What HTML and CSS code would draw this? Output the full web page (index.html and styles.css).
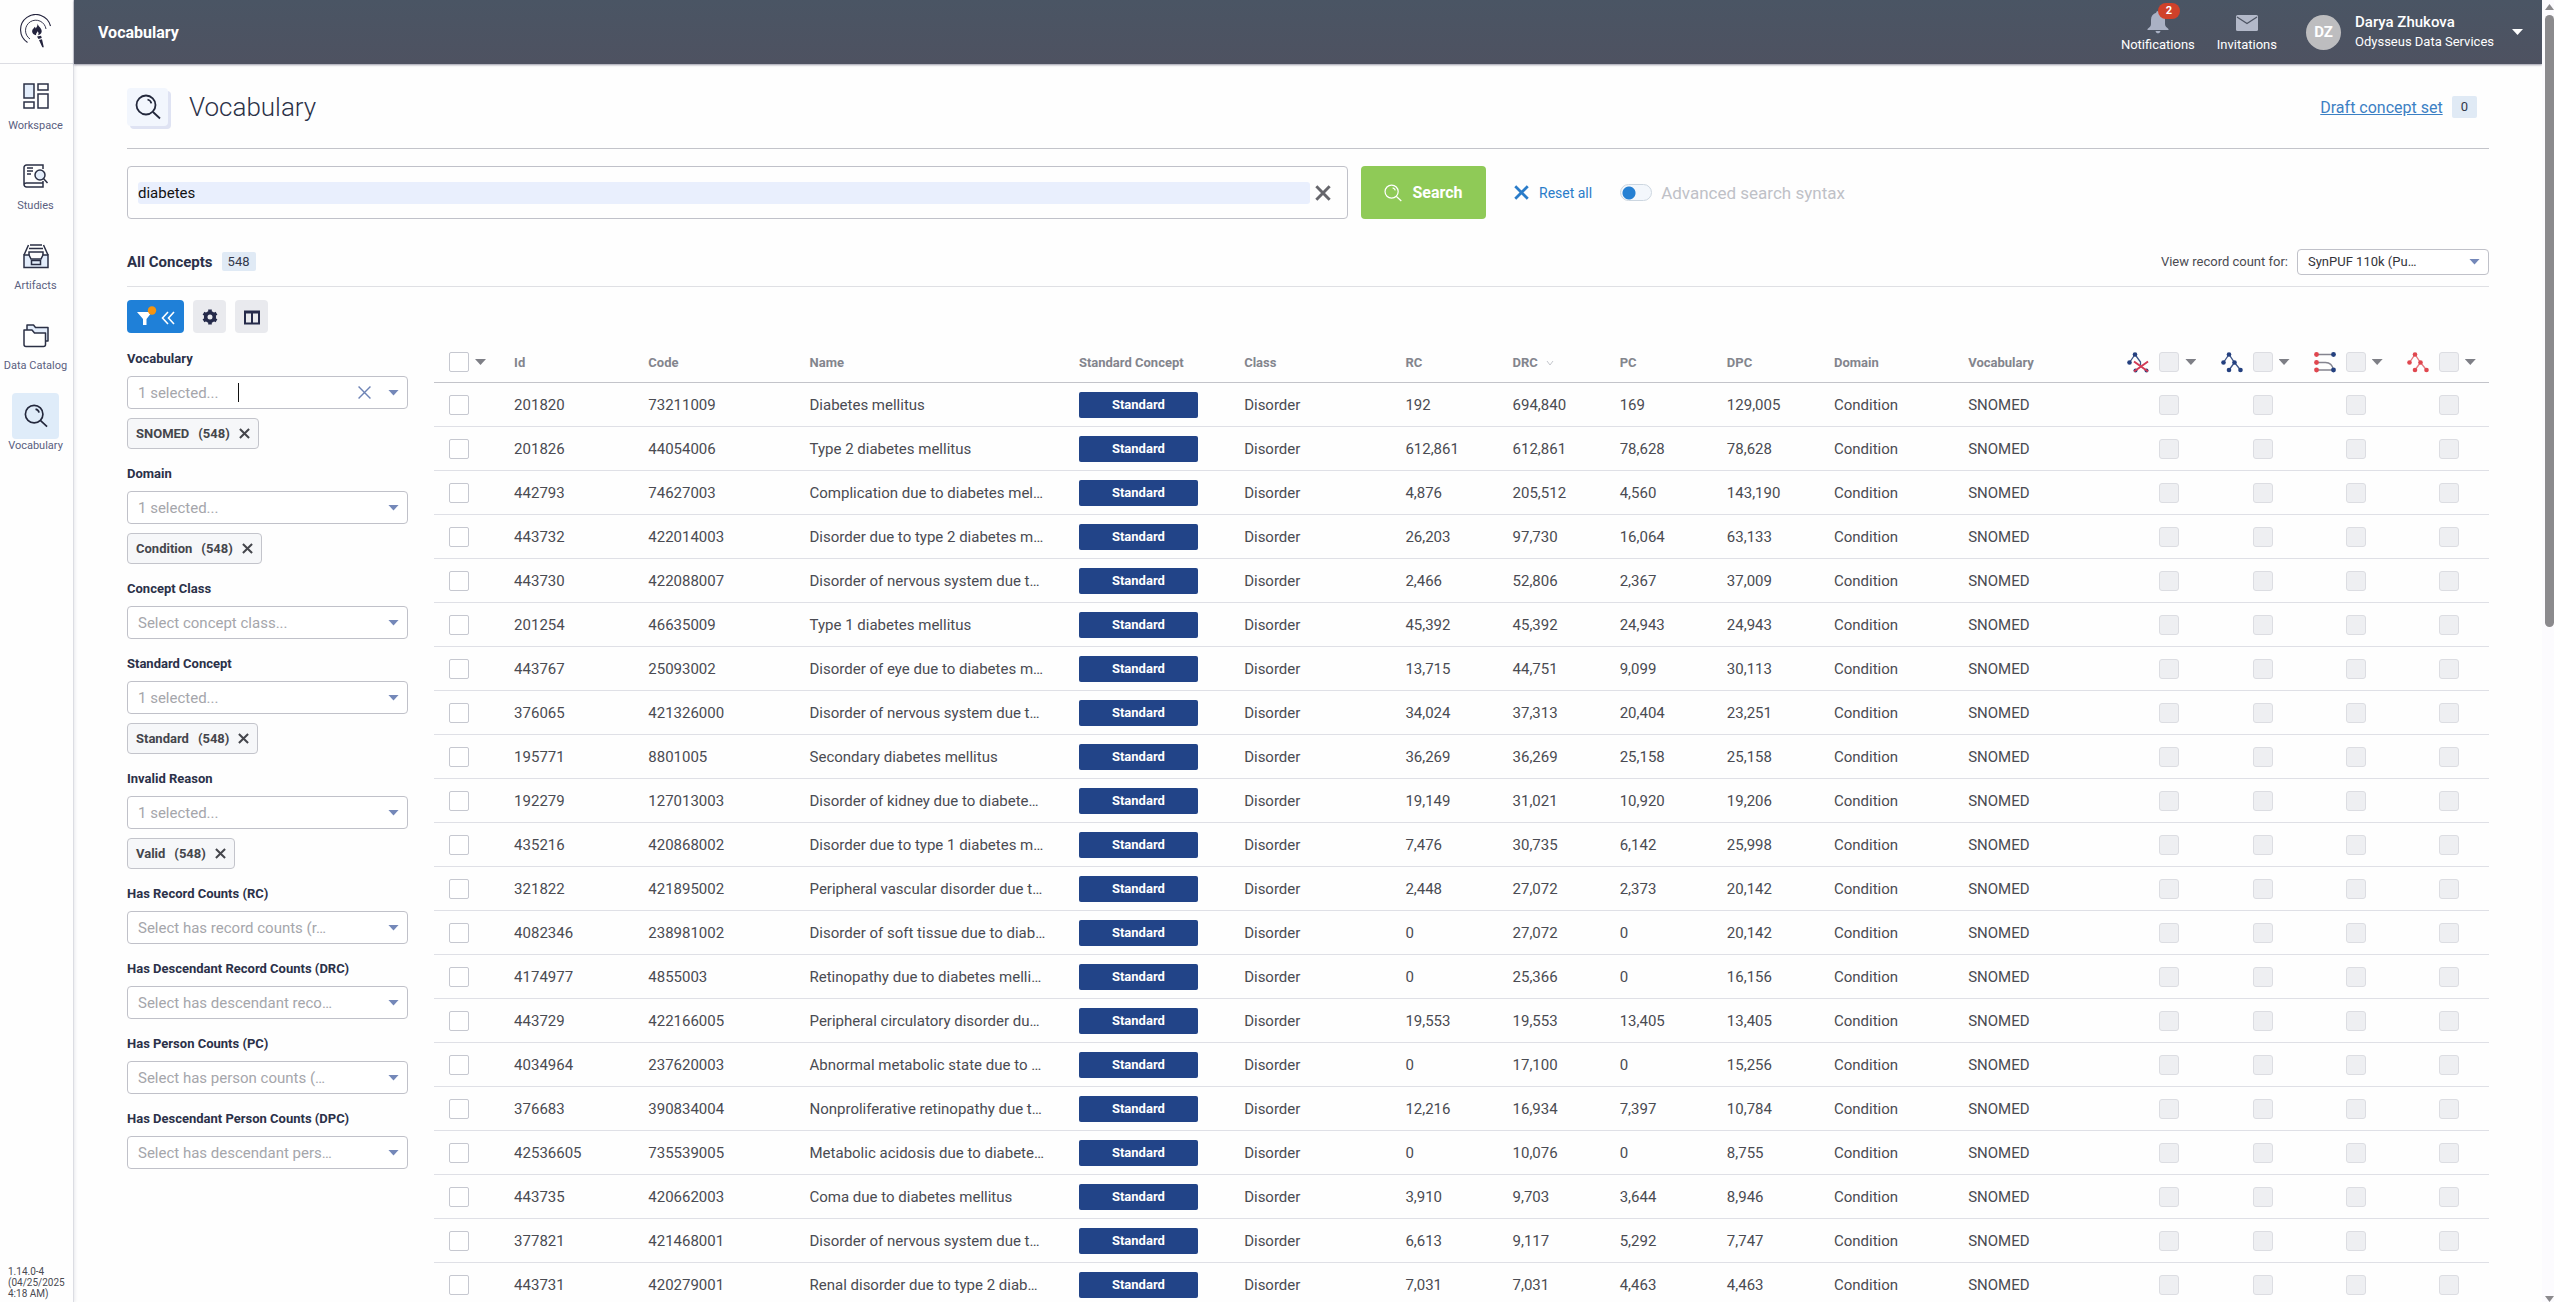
FILE: index.html
```html
<!DOCTYPE html>
<html lang="en">
<head>
    <meta charset="UTF-8">
    <meta name="viewport" content="width=device-width, initial-scale=1.0">
    <title>Vocabulary</title>
    <link rel="stylesheet" href="styles.css">
</head>
<body>

<!-- Shared icons -->
<svg class="sprite" aria-hidden="true">
    <symbol id="i-search" viewBox="0 0 26 26">
        <circle cx="11" cy="11" r="9.5" fill="none" stroke="currentColor" stroke-width="1.8"/>
        <path d="M18 18l7 6.500M12.500 5.500c2 .5 3.500 1.800 3.800 3.800" fill="none" stroke="currentColor" stroke-width="1.800"/>
    </symbol>
    <symbol id="i-close" viewBox="0 0 12 12">
        <path d="M1 1l10 10M11 1L1 11" fill="none" stroke="currentColor" stroke-width="2.200"/>
    </symbol>
    <symbol id="i-close-thin" viewBox="0 0 12 12">
        <path d="M.5.5l11 11M11.500.5l-11 11" fill="none" stroke="currentColor" stroke-width="1.300"/>
    </symbol>
</svg>

<div class="app">
    <!-- Sidebar -->
    <nav class="sidebar">
        <a class="logo" href="#" aria-label="Home">
            <svg width="32" height="34" viewBox="0 0 32 34" fill="none" stroke="#23233d">
                <path d="M30.500 12A15.200 15.200 0 1 0 7.500 28.500" stroke-width="1.100"/>
                <path d="M26 15A10.300 10.300 0 1 0 10 25" stroke-width=".9"/>
                <path d="M17.500 9.500c.5 3 4.500 4.500 4.200 8-.2 2.200-1.800 3.500-3.700 3.700.8-1.400.8-2.600-.4-4-.3 1.600-1.900 2-1.500 4-2.200-.3-4-1.700-4-3.900 0-2.400 2.200-3 2.600-4.600.6.500.9 1 1 1.700 1.300-1.300 1.900-2.900 1.800-4.900z" fill="#23233d" stroke="none"/>
                <path d="M17 22.500l4-.8.8 2.300-3.300 1zM19 26l3-.8 1.800 8h-1.500z" fill="#23233d" stroke="none"/>
            </svg>
        </a>
        <a class="nav-item" href="#">
            <span class="nav-icon">
                <svg width="26" height="26" viewBox="0 0 26 26" fill="none" stroke="#2b3045" stroke-width="1.500">
                    <path d="M1 1h10v14H1z" fill="#e3edfb"/>
                    <path d="M15 1h10v6H15zM1 19h10v6H1zM15 11h10v14H15z"/>
                </svg>
            </span>
            Workspace
        </a>
        <a class="nav-item" href="#">
            <span class="nav-icon">
                <svg width="26" height="26" viewBox="0 0 26 26" fill="none" stroke="#2b3045" stroke-width="1.500">
                    <path d="M20 6V2H3.500A2.500 2.500 0 0 0 1 4.500v17A2.500 2.500 0 0 0 3.500 24H20v-6M1 21.500A2.500 2.500 0 0 1 3.500 20H20M4 5h6M4 8h6M4 11h4"/>
                    <circle cx="17" cy="12" r="5" fill="#e3edfb"/>
                    <path d="M20.500 15.500l4 4.500"/>
                </svg>
            </span>
            Studies
        </a>
        <a class="nav-item" href="#">
            <span class="nav-icon">
                <svg width="26" height="26" viewBox="0 0 26 26" fill="none" stroke="#2b3045" stroke-width="1.500">
                    <path d="M1 12h5l2 4h10l2-4h5v12.500H1z" fill="#e3edfb"/>
                    <path d="M1 12L5.500 2M25 12L20.500 2M6 12V9h14v3M6 5.500h14M7 2h12M8.500 17.500h9v4h-9z"/>
                </svg>
            </span>
            Artifacts
        </a>
        <a class="nav-item" href="#">
            <span class="nav-icon">
                <svg width="26" height="26" viewBox="0 0 26 26" fill="none" stroke="#2b3045" stroke-width="1.500" stroke-linejoin="round">
                    <path d="M4 7V2h6.500l2 2.500H25V18h-2" fill="#e3edfb"/>
                    <path d="M1 7h8l2.500 3H22.500v11.500a2 2 0 0 1-2 2H3a2 2 0 0 1-2-2z" fill="#fff"/>
                </svg>
            </span>
            Data Catalog
        </a>
        <a class="nav-item active" href="#">
            <span class="nav-icon"><svg width="24" height="24"><use href="#i-search"/></svg></span>
            Vocabulary
        </a>
        <p class="version">1.14.0-4 (04/25/2025 4:18 AM)</p>
    </nav>

    <div class="page">
        <!-- Top bar -->
        <header class="topbar">
            <span class="topbar-title">Vocabulary</span>
            <a class="topbar-link" href="#">
                <svg width="22" height="24" viewBox="0 0 22 24" fill="#aab1c4">
                    <path d="M11 1c1 0 1.800.8 1.800 1.700C16 3.500 18 6 18 10v4c0 2 1.500 3.500 3.500 5v1H.5v-1C2.500 17.500 4 16 4 14v-4c0-4 2-6.500 5.200-7.300C9.200 1.800 10 1 11 1zM8.500 21h5c-.4 1.500-1.300 2.300-2.500 2.300S8.900 22.500 8.500 21z"/>
                </svg>
                Notifications
                <span class="alert-count">2</span>
            </a>
            <a class="topbar-link" href="#">
                <svg width="22" height="24" viewBox="0 0 22 24">
                    <rect y="5" width="22" height="16" rx="1.500" fill="#b3b9c9"/>
                    <path d="M1 7l10 6.500L21 7" fill="none" stroke="#4d5463" stroke-width="1.300"/>
                </svg>
                Invitations
            </a>
            <button class="user" type="button">
                <span class="avatar">DZ</span>
                <span class="user-text">
                    <span class="user-name">Darya Zhukova</span>
                    <span class="user-org">Odysseus Data Services</span>
                </span>
                <span class="caret"></span>
            </button>
        </header>

        <main class="content">
            <div class="title-row">
                <span class="title-icon"><svg width="26" height="26"><use href="#i-search"/></svg></span>
                <h1>Vocabulary</h1>
                <a class="draft-link" href="#">Draft concept set</a>
                <span class="count draft-count">0</span>
            </div>

            <!-- Search -->
            <form class="search-row">
                <div class="search-box">
                    <input type="text" value="diabetes" aria-label="Search concepts">
                    <button class="icon-btn" type="button" aria-label="Clear search"><svg width="16" height="16"><use href="#i-close"/></svg></button>
                </div>
                <button class="search-btn" type="button"><svg width="18" height="18"><use href="#i-search"/></svg>Search</button>
                <button class="reset-btn" type="button"><svg width="15" height="15"><use href="#i-close"/></svg>Reset all</button>
                <label class="toggle"><input type="checkbox">Advanced search syntax</label>
            </form>

            <div class="summary-row">
                <h2>All Concepts</h2>
                <span class="count">548</span>
                <label class="record-label" for="source">View record count for:</label>
                <div class="select source-select">
                    <select id="source"><option>SynPUF 110k (Pu…</option></select>
                </div>
            </div>

            <div class="toolbar">
                <button class="tool tool-filter" type="button" aria-label="Hide filters">
                    <svg width="40" height="22" viewBox="0 0 40 22">
                        <path d="M1 6h15l-5.500 7v6H7v-6z" fill="#fff"/>
                        <circle cx="16" cy="4.500" r="4.200" fill="#f5940f"/>
                        <path d="M32 6l-5.500 6L32 18M38 6l-5.500 6L38 18" fill="none" stroke="#fff" stroke-width="1.600"/>
                    </svg>
                </button>
                <button class="tool" type="button" aria-label="Settings">
                    <svg width="16" height="16" viewBox="0 0 16 16" fill="none" stroke="#252a4a">
                        <circle cx="8" cy="8" r="4.300" stroke-width="3.600"/>
                        <path d="M8 .500v3M8 12.500v3M1.500 4.200l2.600 1.500M11.900 10.300l2.600 1.500M1.500 11.800l2.600-1.500M11.900 5.700l2.600-1.500" stroke-width="3.600"/>
                    </svg>
                </button>
                <button class="tool" type="button" aria-label="Columns">
                    <svg width="16" height="16" viewBox="0 0 16 16" fill="none" stroke="#252a4a" stroke-width="2">
                        <path d="M1 2.500h14v12H1zM1 3.500h14M8 3v11"/>
                    </svg>
                </button>
            </div>

            <div class="results">
                <!-- Filters -->
                <aside class="filters">
                    <div class="filter">
                        <label for="f1">Vocabulary</label>
                        <div class="select">
                            <select id="f1"><option>1 selected...</option></select>
                            <span class="text-cursor"></span>
                            <button class="icon-btn clear" type="button" aria-label="Clear vocabulary"><svg width="13" height="13"><use href="#i-close-thin"/></svg></button>
                        </div>
                        <button class="chip" type="button"><span>SNOMED</span> <span>(548)</span><svg width="11" height="11"><use href="#i-close"/></svg></button>
                    </div>
                    <div class="filter">
                        <label for="f2">Domain</label>
                        <div class="select"><select id="f2"><option>1 selected...</option></select></div>
                        <button class="chip" type="button"><span>Condition</span> <span>(548)</span><svg width="11" height="11"><use href="#i-close"/></svg></button>
                    </div>
                    <div class="filter">
                        <label for="f3">Concept Class</label>
                        <div class="select"><select id="f3"><option>Select concept class...</option></select></div>
                    </div>
                    <div class="filter">
                        <label for="f4">Standard Concept</label>
                        <div class="select"><select id="f4"><option>1 selected...</option></select></div>
                        <button class="chip" type="button"><span>Standard</span> <span>(548)</span><svg width="11" height="11"><use href="#i-close"/></svg></button>
                    </div>
                    <div class="filter">
                        <label for="f5">Invalid Reason</label>
                        <div class="select"><select id="f5"><option>1 selected...</option></select></div>
                        <button class="chip" type="button"><span>Valid</span> <span>(548)</span><svg width="11" height="11"><use href="#i-close"/></svg></button>
                    </div>
                    <div class="filter">
                        <label for="f6">Has Record Counts (RC)</label>
                        <div class="select"><select id="f6"><option>Select has record counts (r…</option></select></div>
                    </div>
                    <div class="filter">
                        <label for="f7">Has Descendant Record Counts (DRC)</label>
                        <div class="select"><select id="f7"><option>Select has descendant reco…</option></select></div>
                    </div>
                    <div class="filter">
                        <label for="f8">Has Person Counts (PC)</label>
                        <div class="select"><select id="f8"><option>Select has person counts (…</option></select></div>
                    </div>
                    <div class="filter">
                        <label for="f9">Has Descendant Person Counts (DPC)</label>
                        <div class="select"><select id="f9"><option>Select has descendant pers…</option></select></div>
                    </div>
                </aside>

                <!-- Concepts -->
                <div class="table-wrap">
                    <table>
                        <colgroup>
                            <col class="col-check"><col class="col-id"><col class="col-code"><col class="col-name">
                            <col class="col-standard"><col class="col-class"><col class="col-num"><col class="col-num">
                            <col class="col-num"><col class="col-num"><col class="col-id"><col class="col-vocab">
                            <col class="col-flag"><col class="col-flag"><col class="col-flag"><col class="col-flag">
                        </colgroup>
                        <thead>
                            <tr>
                                <th class="check"><div class="head-tools"><input type="checkbox" aria-label="Select all"><span class="caret"></span></div></th>
                                <th>Id</th>
                                <th>Code</th>
                                <th>Name</th>
                                <th>Standard Concept</th>
                                <th>Class</th>
                                <th>RC</th>
                                <th>DRC <svg class="sort" width="8" height="6" viewBox="0 0 8 6"><path d="M1 1l3 4 3-4" fill="none" stroke="#c4c6cc"/></svg></th>
                                <th>PC</th>
                                <th>DPC</th>
                                <th>Domain</th>
                                <th>Vocabulary</th>
                                <th class="flag"><div class="head-tools">
                                    <svg width="22" height="21" viewBox="0 0 22 21">
                                        <path d="M8 2.500l-5.500 8M8 2.500l5.500 7.500v3" fill="none" stroke="#3f5688" stroke-width="1.300"/>
                                        <g fill="#24407f"><circle cx="8" cy="2.500" r="2.300"/><circle cx="2.500" cy="10.500" r="2.300"/><circle cx="8.500" cy="18.500" r="2"/><circle cx="19.500" cy="18.500" r="2"/></g>
                                        <path d="M7 9.500l14 10M21 9.500l-14 10" fill="none" stroke="#d23a55" stroke-width="2"/>
                                    </svg>
                                    <input type="checkbox" disabled aria-label="Exclude all"><span class="caret"></span>
                                </div></th>
                                <th class="flag"><div class="head-tools">
                                    <svg width="22" height="21" viewBox="0 0 22 21">
                                        <path d="M2.500 10.500L8 2.500l5.500 8 6 7.500M13.500 10.500L8 18" fill="none" stroke="#3f5688" stroke-width="1.300"/>
                                        <g fill="#24407f"><circle cx="8" cy="2.500" r="2.300"/><circle cx="2.500" cy="10.500" r="2.300"/><circle cx="13.500" cy="10.500" r="2.300"/><circle cx="8" cy="18" r="2.300"/><circle cx="19.500" cy="18" r="2.300"/></g>
                                    </svg>
                                    <input type="checkbox" disabled aria-label="Include all descendants"><span class="caret"></span>
                                </div></th>
                                <th class="flag"><div class="head-tools">
                                    <svg width="22" height="21" viewBox="0 0 22 21">
                                        <path d="M2.500 2.500h17M2.500 10.500h9c4 0 7 2.500 8 7.500h-17" fill="none" stroke="#84848f" stroke-width="1.300"/>
                                        <g fill="#e0474f"><circle cx="2.500" cy="2.500" r="2.400"/><circle cx="2.500" cy="10.500" r="2.400"/><circle cx="2.500" cy="18" r="2.400"/></g>
                                        <g fill="#24407f"><circle cx="19.500" cy="2.500" r="2.400"/><circle cx="19.500" cy="18" r="2.400"/></g>
                                    </svg>
                                    <input type="checkbox" disabled aria-label="Include all mapped"><span class="caret"></span>
                                </div></th>
                                <th class="flag"><div class="head-tools">
                                    <svg width="22" height="21" viewBox="0 0 22 21">
                                        <path d="M2.500 10.500L8 2.500l5.500 8 6 7.500M13.500 10.500L8 18" fill="none" stroke="#e67a80" stroke-width="1.300"/>
                                        <g fill="#e0474f"><circle cx="8" cy="2.500" r="2.300"/><circle cx="2.500" cy="10.500" r="2.300"/><circle cx="13.500" cy="10.500" r="2.300"/><circle cx="8" cy="18" r="2.300"/><circle cx="19.500" cy="18" r="2.300"/></g>
                                    </svg>
                                    <input type="checkbox" disabled aria-label="Exclude all descendants"><span class="caret"></span>
                                </div></th>
                            </tr>
                        </thead>
                        <tbody id="concepts"></tbody>
                    </table>
                </div>
            </div>
        </main>
    </div>

    <div class="scrollbar" aria-hidden="true">
        <span class="scroll-up"></span>
        <span class="scroll-track"><span class="scroll-thumb"></span></span>
        <span class="scroll-down"></span>
    </div>
</div>

<script>
    // id, code, name, RC, DRC, PC, DPC
    const concepts = [
        ['201820', '73211009', 'Diabetes mellitus', '192', '694,840', '169', '129,005'],
        ['201826', '44054006', 'Type 2 diabetes mellitus', '612,861', '612,861', '78,628', '78,628'],
        ['442793', '74627003', 'Complication due to diabetes mel…', '4,876', '205,512', '4,560', '143,190'],
        ['443732', '422014003', 'Disorder due to type 2 diabetes m…', '26,203', '97,730', '16,064', '63,133'],
        ['443730', '422088007', 'Disorder of nervous system due t…', '2,466', '52,806', '2,367', '37,009'],
        ['201254', '46635009', 'Type 1 diabetes mellitus', '45,392', '45,392', '24,943', '24,943'],
        ['443767', '25093002', 'Disorder of eye due to diabetes m…', '13,715', '44,751', '9,099', '30,113'],
        ['376065', '421326000', 'Disorder of nervous system due t…', '34,024', '37,313', '20,404', '23,251'],
        ['195771', '8801005', 'Secondary diabetes mellitus', '36,269', '36,269', '25,158', '25,158'],
        ['192279', '127013003', 'Disorder of kidney due to diabete…', '19,149', '31,021', '10,920', '19,206'],
        ['435216', '420868002', 'Disorder due to type 1 diabetes m…', '7,476', '30,735', '6,142', '25,998'],
        ['321822', '421895002', 'Peripheral vascular disorder due t…', '2,448', '27,072', '2,373', '20,142'],
        ['4082346', '238981002', 'Disorder of soft tissue due to diab…', '0', '27,072', '0', '20,142'],
        ['4174977', '4855003', 'Retinopathy due to diabetes melli…', '0', '25,366', '0', '16,156'],
        ['443729', '422166005', 'Peripheral circulatory disorder du…', '19,553', '19,553', '13,405', '13,405'],
        ['4034964', '237620003', 'Abnormal metabolic state due to …', '0', '17,100', '0', '15,256'],
        ['376683', '390834004', 'Nonproliferative retinopathy due t…', '12,216', '16,934', '7,397', '10,784'],
        ['42536605', '735539005', 'Metabolic acidosis due to diabete…', '0', '10,076', '0', '8,755'],
        ['443735', '420662003', 'Coma due to diabetes mellitus', '3,910', '9,703', '3,644', '8,946'],
        ['377821', '421468001', 'Disorder of nervous system due t…', '6,613', '9,117', '5,292', '7,747'],
        ['443731', '420279001', 'Renal disorder due to type 2 diab…', '7,031', '7,031', '4,463', '4,463']
    ];

    const flags = ['Exclude', 'Descendants', 'Mapped', 'Exclude descendants'];

    document.getElementById('concepts').innerHTML = concepts.map(([id, code, name, rc, drc, pc, dpc]) => `
        <tr>
            <td class="check"><input type="checkbox" aria-label="Select ${id}"></td>
            <td>${id}</td>
            <td>${code}</td>
            <td>${name}</td>
            <td><span class="tag">Standard</span></td>
            <td>Disorder</td>
            <td>${rc}</td>
            <td>${drc}</td>
            <td>${pc}</td>
            <td>${dpc}</td>
            <td>Condition</td>
            <td>SNOMED</td>
            ${flags.map(flag => `<td class="flag"><input type="checkbox" disabled aria-label="${flag} ${id}"></td>`).join('')}
        </tr>
    `).join('');
</script>
</body>
</html>
```
FILE: styles.css
```css
* {
    box-sizing: border-box;
}
body {
    margin: 0;
    font-family: Roboto, "Liberation Sans", sans-serif;
    font-size: 15px;
    color: #4a4b52;
    background-color: #fefefe;
}
button, input, select {
    font: inherit;
    color: inherit;
    margin: 0;
}
button {
    border: 0;
    padding: 0;
    background: none;
    cursor: pointer;
}
a {
    color: inherit;
    text-decoration: none;
}
h1, h2, p {
    margin: 0;
}
svg {
    display: block;
    flex: none;
}
.sprite {
    position: absolute;
    width: 0;
    height: 0;
}
.app {
    display: flex;
    height: 100vh;
    overflow: hidden;
}

/* Sidebar */
.sidebar {
    display: flex;
    flex-direction: column;
    flex: none;
    width: 74px;
    border-right: 1px solid #dcdde3;
    box-shadow: 1px 0 3px rgba(40, 45, 80, 0.1);
}
.logo {
    display: flex;
    justify-content: center;
    height: 64px;
    padding: 14px 2px 0 0;
    margin-bottom: 9px;
    border-bottom: 1px solid #dcdde3;
}
.nav-item {
    display: flex;
    flex-direction: column;
    align-items: center;
    margin-bottom: 20px;
    padding-right: 2px;
    font-size: 11px;
    line-height: 14px;
    color: #5a6080;
    white-space: nowrap;
}
.nav-icon {
    display: flex;
    align-items: center;
    justify-content: center;
    width: 47px;
    height: 46px;
    border-radius: 4px;
    color: #23283c;
}
.active .nav-icon {
    background-color: #dfecf9;
}
.version {
    margin-top: auto;
    padding: 0 6px 3px 8px;
    font-size: 10px;
    line-height: 11px;
}

/* Top bar */
.page {
    flex: 1;
    min-width: 0;
}
.topbar {
    display: flex;
    align-items: center;
    height: 64px;
    padding: 0 19px 0 24px;
    color: #fff;
    background: linear-gradient(#4a5564, #4e5261);
    box-shadow: 0 1px 2px rgba(50, 50, 80, 0.5);
}
.topbar-title {
    margin-right: auto;
    font-size: 16px;
    font-weight: 700;
}
.topbar-link {
    position: relative;
    display: flex;
    flex-direction: column;
    align-items: center;
    gap: 2px;
    margin-right: 22px;
    font-size: 13px;
    line-height: 18px;
}
.alert-count {
    position: absolute;
    top: -7px;
    left: 37px;
    width: 22px;
    border-radius: 8px;
    background-color: #d0412a;
    font-size: 11px;
    font-weight: 700;
    line-height: 16px;
    text-align: center;
}
.user {
    display: flex;
    align-items: center;
    margin-left: 7px;
    text-align: left;
}
.avatar {
    width: 35px;
    margin-right: 14px;
    border-radius: 50%;
    background-color: #bdbdbf;
    font-weight: 700;
    line-height: 35px;
    text-align: center;
}
.user-text {
    display: flex;
    flex-direction: column;
    margin-right: 18px;
    font-size: 13px;
    line-height: 19px;
}
.user-name {
    font-size: 15px;
    font-weight: 500;
}
.caret {
    width: 11px;
    height: 6px;
    background-color: currentColor;
    clip-path: polygon(0 0, 100% 0, 50% 100%);
}

/* Title and search */
.content {
    padding: 0 53px;
}
.title-row {
    display: flex;
    align-items: center;
    height: 85px;
    padding: 2px 12px 0 0;
    border-bottom: 1px solid #c3c4ca;
}
.title-icon {
    display: flex;
    align-items: center;
    justify-content: center;
    width: 41px;
    height: 38px;
    margin-right: 21px;
    border-radius: 4px;
    color: #23283c;
    background-color: #f2f6fd;
    box-shadow: 3px 3px 0 #dfe3f3;
}
h1 {
    margin-right: auto;
    font-size: 26px;
    font-weight: 300;
    color: #2c3248;
}
.draft-link {
    margin-right: 9px;
    font-size: 16px;
    color: #3c80c4;
    text-decoration: underline;
}
.count {
    padding: 0 6px;
    border-radius: 2px;
    background-color: #e0eaf5;
    font-size: 13px;
    line-height: 19px;
    color: #33384a;
}
.draft-count {
    padding: 0 9px;
    line-height: 22px;
}
.search-row {
    display: flex;
    align-items: center;
    height: 53px;
    margin-top: 17px;
}
.search-box {
    display: flex;
    align-items: center;
    gap: 5px;
    width: calc(50% + 40px);
    height: 53px;
    margin-right: 13px;
    padding: 0 16px 0 10px;
    border: 1px solid #c0c1c9;
    border-radius: 4px;
    color: #66666c;
}
.search-box input {
    flex: 1;
    min-width: 0;
    height: 22px;
    padding: 0;
    border: 0;
    border-radius: 3px;
    background-color: #e9effd;
    color: #111;
}
.search-btn {
    display: flex;
    align-items: center;
    justify-content: center;
    gap: 10px;
    width: 125px;
    height: 53px;
    margin-right: 28px;
    border-radius: 4px;
    background-color: #8fca57;
    color: #fff;
    font-size: 16px;
    font-weight: 700;
}
.reset-btn {
    display: flex;
    align-items: center;
    gap: 10px;
    margin-right: 28px;
    font-size: 14px;
    color: #2a7cc9;
}
.toggle {
    display: flex;
    align-items: center;
    gap: 9px;
    font-size: 17px;
    color: #bfc1c7;
}
.toggle input {
    appearance: none;
    width: 32px;
    height: 17px;
    border: 1px solid #ccd6e0;
    border-radius: 9px;
    background: radial-gradient(circle at 8px 8px, #2580d3 6px, #f3f7fc 7px);
}
.summary-row {
    display: flex;
    align-items: center;
    height: 68px;
    padding-top: 18px;
    border-bottom: 1px solid #dfe0e4;
}
h2 {
    margin-right: 9px;
    font-size: 15px;
    font-weight: 700;
    color: #2b3149;
}
.record-label {
    margin: 0 9px 0 auto;
    font-size: 13px;
}

/* Drop-downs */
.select {
    position: relative;
    height: 33px;
}
.select select {
    appearance: none;
    width: 100%;
    height: 100%;
    padding: 0 60px 0 10px;
    border: 1px solid #c0c1c9;
    border-radius: 4px;
    background-color: #fff;
    color: #a5a6ab;
}
.select::after {
    content: "";
    position: absolute;
    top: calc(50% - 3px);
    right: 9px;
    width: 11px;
    height: 6px;
    background-color: #7488b9;
    clip-path: polygon(0 0, 100% 0, 50% 100%);
    pointer-events: none;
}
.source-select {
    width: 192px;
    height: 26px;
}
.source-select select {
    color: #33343a;
    font-size: 13px;
}
.text-cursor {
    position: absolute;
    top: 7px;
    left: 111px;
    width: 1px;
    height: 19px;
    background-color: #111;
}
.clear {
    position: absolute;
    top: 10px;
    right: 37px;
    color: #6d83b5;
}

/* Toolbar */
.toolbar {
    display: flex;
    gap: 9px;
    margin-top: 13px;
}
.tool {
    display: flex;
    align-items: center;
    justify-content: center;
    width: 33px;
    height: 33px;
    border-radius: 4px;
    background-color: #e9eaee;
}
.tool-filter {
    width: 57px;
    background-color: #1f80d8;
}

/* Filters */
.results {
    display: flex;
    align-items: flex-start;
    gap: 26px;
    margin-top: 9px;
}
.filters {
    flex: none;
    width: 281px;
    padding-top: 7px;
}
.filter {
    margin-bottom: 15px;
}
.filter label {
    display: block;
    margin-bottom: 7px;
    font-size: 13px;
    font-weight: 700;
    line-height: 20px;
    color: #2b3149;
}
.chip {
    display: flex;
    align-items: center;
    gap: 9px;
    height: 31px;
    margin-top: 9px;
    padding: 0 8px;
    border: 1px solid #c3c4cb;
    border-radius: 4px;
    background-color: #f6f7f9;
    font-size: 13px;
    font-weight: 700;
    color: #45464c;
}

/* Table */
.table-wrap {
    flex: 1;
    min-width: 0;
}
table {
    width: 100%;
    table-layout: fixed;
    border-spacing: 0;
}
.col-check { width: 70px; }
.col-id { width: 134px; }
.col-code { width: 161px; }
.col-name { width: 269px; }
.col-standard { width: 165px; }
.col-class { width: 161px; }
.col-num { width: 107px; }
.col-vocab { width: 158px; }
.col-flag { width: 93px; }
th, td {
    height: 44px;
    padding: 0 10px;
    border-bottom: 1px solid #dfe0e6;
    text-align: left;
    white-space: nowrap;
}
th {
    height: 41px;
    border-bottom-color: #c3c4ca;
    font-size: 13px;
    font-weight: 700;
    color: #83858d;
}
.check {
    padding: 0 0 0 15px;
}
th.flag {
    padding: 0 0 0 11px;
}
td.flag {
    padding: 0 0 0 43px;
}
.head-tools {
    display: flex;
    align-items: center;
}
.head-tools svg {
    margin-right: 10px;
}
.head-tools .caret {
    margin-left: 6px;
    background-color: #7e7f86;
}
.sort {
    display: inline-block;
    margin-left: 5px;
    vertical-align: middle;
}
table input {
    appearance: none;
    display: block;
    flex: none;
    width: 20px;
    height: 20px;
    border: 1px solid #c6c8d0;
    border-radius: 2px;
    background-color: #fff;
}
table input:disabled {
    border-color: #dcdde2;
    border-radius: 3px;
    background-color: #eeeff2;
}
.tag {
    display: block;
    width: 119px;
    border-radius: 2px;
    background-color: #224488;
    color: #fff;
    font-size: 13px;
    font-weight: 700;
    line-height: 26px;
    text-align: center;
}

/* Scrollbar */
.scrollbar {
    display: flex;
    flex-direction: column;
    flex: none;
    width: 12px;
    padding: 4px 0 0 3px;
    background-color: #fcfbfe;
}
.scroll-track {
    flex: 1;
    padding: 5px 0;
}
.scroll-thumb {
    display: block;
    height: 48%;
    border-radius: 5px;
    background-color: #8b8a8d;
}
.scroll-up, .scroll-down {
    height: 6px;
    background-color: #8b8a8d;
}
.scroll-up {
    clip-path: polygon(50% 0, 100% 100%, 0 100%);
}
.scroll-down {
    clip-path: polygon(0 0, 100% 0, 50% 100%);
}
```
